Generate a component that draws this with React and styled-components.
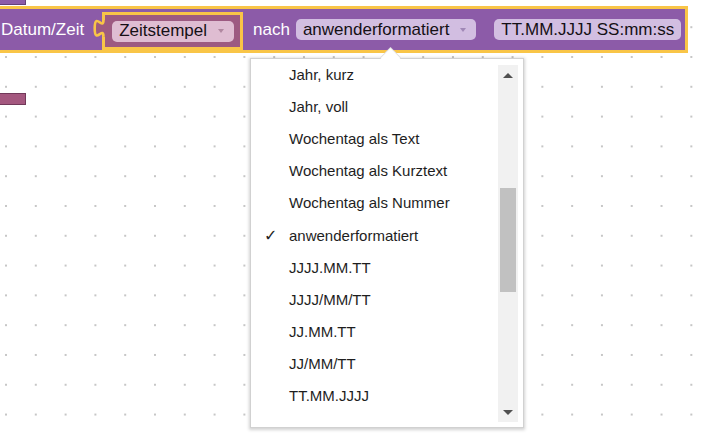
import React from "react";
import styled, { createGlobalStyle } from "styled-components";

const GlobalStyle = createGlobalStyle`
  html, body {
    margin: 0;
    padding: 0;
    background: #fff;
  }
  body {
    font-family: "Liberation Sans", Arial, sans-serif;
  }
`;

/* Blockly-like workspace with a dotted grid */
const Workspace = styled.div`
  position: relative;
  width: 704px;
  height: 437px;
  overflow: hidden;
  background-color: #fff;
  background-image: radial-gradient(circle, #c6c6c6 0.9px, transparent 1.5px);
  background-size: 29.8px 29.8px;
  background-position: -8.9px 12.3px;
`;

/* Partially visible neighbouring blocks at the canvas edge */
const StubBlock = styled.div`
  position: absolute;
  left: -10px;
  top: ${(p) => p.$y}px;
  width: 36px;
  height: ${(p) => p.$h}px;
  box-sizing: border-box;
  background: ${(p) => p.$color};
  border: 1px solid ${(p) => p.$edge};
`;

const Block = styled.div`
  position: absolute;
  left: ${(p) => p.$x}px;
  top: ${(p) => p.$y}px;
  display: flex;
  align-items: center;
  height: 41px;
  padding: 0 4px 0 10px;
  background: #8c5ba8;
  border: 3px solid #f9c547;
  white-space: nowrap;
`;

const Label = styled.span`
  color: #fff;
  font-size: 17px;
  margin-left: ${(p) => p.$ml || 0}px;
`;

const ValueBlock = styled.div`
  position: relative;
  align-self: flex-end;
  display: flex;
  align-items: center;
  height: 32px;
  margin-left: 18px;
  padding: 0 6px 0 7px;
  background: #9d5a81;
  border: 3px solid #f9c547;
`;

const OutputTab = styled.svg`
  position: absolute;
  left: -12px;
  top: 3px;
  overflow: visible;
`;

const Field = styled.span`
  display: inline-flex;
  align-items: center;
  height: 21px;
  margin-left: ${(p) => p.$ml || 0}px;
  padding: 0 ${(p) => (p.$dropdown ? 10 : 7)}px 0 7px;
  border-radius: 5px;
  background: ${(p) => p.$bg};
  color: #151015;
  font-size: 17px;
`;

const DropArrow = styled.span`
  width: 0;
  height: 0;
  margin-left: 11px;
  border-left: 3px solid transparent;
  border-right: 3px solid transparent;
  border-top: 4px solid ${(p) => p.$color};
`;

/* Dropdown menu */
const MenuPointer = styled.div`
  position: absolute;
  left: 383px;
  top: 50px;
  width: 14px;
  height: 14px;
  background: #fff;
  border-top: 1px solid rgba(0, 0, 0, 0.12);
  border-left: 1px solid rgba(0, 0, 0, 0.12);
  transform: rotate(45deg);
  z-index: 3;
`;

const Menu = styled.div`
  position: absolute;
  left: 250px;
  top: 58px;
  width: 274px;
  height: 370px;
  box-sizing: border-box;
  display: grid;
  grid-template-columns: 1fr 20px;
  padding-right: 5px;
  background: #fff;
  border: 1px solid rgba(0, 0, 0, 0.18);
  box-shadow: 0 1px 3px 1px rgba(0, 0, 0, 0.18);
  z-index: 2;
`;

const ItemList = styled.ul`
  list-style: none;
  margin: -1px 0 0;
  padding: 0;
  overflow: hidden;
`;

const Item = styled.li`
  display: flex;
  align-items: center;
  height: 32.2px;
  padding-left: 13px;
  font-size: 15px;
  color: #1e1e1e;
  white-space: nowrap;
`;

const Check = styled.span`
  width: 25px;
  font-family: "DejaVu Sans", sans-serif;
  font-size: 16px;
  color: #222;
`;

const Scrollbar = styled.div`
  display: flex;
  flex-direction: column;
  margin: 6px 0 5px;
  background: #f1f1f1;
`;

const ScrollButton = styled.div`
  display: flex;
  align-items: center;
  justify-content: center;
  height: 20px;
  flex: none;
`;

const ScrollArrow = styled.span`
  width: 0;
  height: 0;
  border-left: 5px solid transparent;
  border-right: 5px solid transparent;
  ${(p) =>
    p.$up
      ? "border-bottom: 5px solid #505050;"
      : "border-top: 5px solid #505050;"}
`;

const Track = styled.div`
  flex: 1;
`;

const Thumb = styled.div`
  height: ${(p) => p.$size}px;
  margin: ${(p) => p.$offset}px 2px 0;
  background: #c1c1c1;
`;

const options = [
  "Jahr, kurz",
  "Jahr, voll",
  "Wochentag als Text",
  "Wochentag als Kurztext",
  "Wochentag als Nummer",
  "anwenderformatiert",
  "JJJJ.MM.TT",
  "JJJJ/MM/TT",
  "JJ.MM.TT",
  "JJ/MM/TT",
  "TT.MM.JJJJ",
];

const selected = "anwenderformatiert";

export default function App() {
  return (
    <>
      <GlobalStyle />
      <Workspace>
        <StubBlock $y={-10} $h={15} $color="#8c5ba8" $edge="#65407a" />
        <StubBlock $y={93} $h={12} $color="#a4587f" $edge="#72395a" />

        <Block $x={-12} $y={6}>
          <Label>Datum/Zeit</Label>
          <ValueBlock>
            <OutputTab width="16" height="20" viewBox="0 0 16 20">
              <path
                d="M 10.5 2 c 0 11 -8.8 -8.8 -8.8 8.25 s 8.8 -2.75 8.8 8.25 L 13 18.5 L 13 2 Z"
                fill="#9d5a81"
              />
              <path
                d="M 10.5 2 c 0 11 -8.8 -8.8 -8.8 8.25 s 8.8 -2.75 8.8 8.25"
                fill="none"
                stroke="#f9c547"
                strokeWidth="2.6"
              />
            </OutputTab>
            <Field $bg="#dfbdd2" $dropdown>
              Zeitstempel
              <DropArrow $color="rgba(120, 70, 100, 0.45)" />
            </Field>
          </ValueBlock>
          <Label $ml={10}>nach</Label>
          <Field $ml={6} $bg="#d2bee1" $dropdown>
            anwenderformatiert
            <DropArrow $color="rgba(100, 70, 130, 0.45)" />
          </Field>
          <Field $ml={18} $bg="#d2bee1">
            TT.MM.JJJJ SS:mm:ss
          </Field>
        </Block>

        <MenuPointer />
        <Menu>
          <ItemList>
            {options.map((o) => (
              <Item key={o}>
                <Check>{o === selected ? "✓" : ""}</Check>
                {o}
              </Item>
            ))}
          </ItemList>
          <Scrollbar>
            <ScrollButton>
              <ScrollArrow $up />
            </ScrollButton>
            <Track>
              <Thumb $offset={103} $size={104} />
            </Track>
            <ScrollButton>
              <ScrollArrow />
            </ScrollButton>
          </Scrollbar>
        </Menu>
      </Workspace>
    </>
  );
}
